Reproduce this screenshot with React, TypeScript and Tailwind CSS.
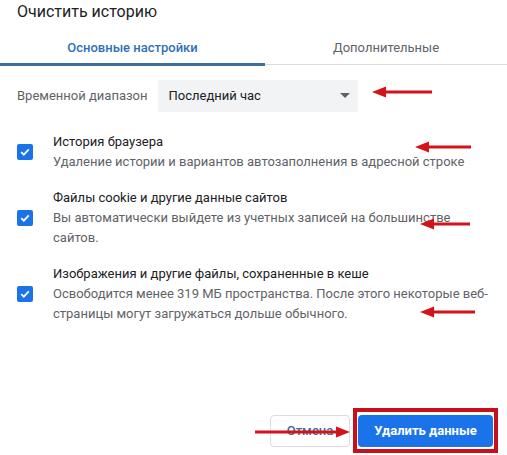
function Arrow({ left, top, width, dir }: { left: number; top: number; width: number; dir: "left" | "right" }) {
  // red annotation arrow drawn over the dialog
  return (
    <svg
      className="absolute pointer-events-none"
      style={{ left, top: top - 6 }}
      width={width}
      height={12}
      viewBox={`0 0 ${width} 12`}
    >
      {dir === "left" ? (
        <>
          <rect x={10} y={4.5} width={width - 10} height={3} fill="#d3131b" />
          <polygon points="0,6 14,0.5 14,11.5" fill="#d3131b" />
        </>
      ) : (
        <>
          <rect x={0} y={4.5} width={width - 10} height={3} fill="#d3131b" />
          <polygon points={`${width},6 ${width - 14},0.5 ${width - 14},11.5`} fill="#d3131b" />
        </>
      )}
    </svg>
  );
}

function Check() {
  return (
    <div className="w-4 h-4 rounded-[2px] bg-[#1a73e8] flex items-center justify-center shrink-0">
      <svg width="12" height="12" viewBox="0 0 12 12">
        <path d="M2.2 6.2 L4.8 8.7 L9.8 3.4" stroke="white" strokeWidth="1.8" fill="none" />
      </svg>
    </div>
  );
}

interface ItemProps {
  title: string;
  desc: string;
}

function Item({ title, desc }: ItemProps) {
  return (
    <div className="flex items-center pl-[17px]">
      <Check />
      <div className="ml-5 w-[440px]">
        <div className="text-[#202124] leading-5">{title}</div>
        <div className="text-[#5f6368] leading-5">{desc}</div>
      </div>
    </div>
  );
}

export default function App() {
  return (
    <div className="relative w-[507px] h-[455px] bg-white overflow-hidden text-[13px] font-['Roboto',sans-serif]">
      <div className="pl-[17px] pt-[2px] text-[16px] leading-5 text-[#202124]">Очистить историю</div>

      <div className="flex mt-[6px] h-[38px]">
        <div className="w-[265px] flex items-center justify-center font-medium text-[#2f6fb8] border-b-[3px] border-[#3b6f9c] pt-[4px]">
          Основные настройки
        </div>
        <div className="flex-1 flex items-center justify-center text-[#5f6368] border-b border-[#dadce0] pt-[4px] mb-[1px]">
          Дополнительные
        </div>
      </div>

      <div className="flex items-center pl-[17px] mt-[14px]">
        <span className="text-[#5f6368]">Временной диапазон</span>
        <div className="ml-[11px] w-[200px] h-[32px] bg-[#f1f3f4] rounded-[2px] flex items-center justify-between pl-[10px] pr-[8px] text-[#202124]">
          <span>Последний час</span>
          <svg width="10" height="6" viewBox="0 0 10 6">
            <polygon points="0,0 10,0 5,5" fill="#5f6368" />
          </svg>
        </div>
      </div>

      <div className="mt-[20px] flex flex-col gap-[16px]">
        <Item title="История браузера" desc="Удаление истории и вариантов автозаполнения в адресной строке" />
        <Item title="Файлы cookie и другие данные сайтов" desc="Вы автоматически выйдете из учетных записей на большинстве сайтов." />
        <Item
          title="Изображения и другие файлы, сохраненные в кеше"
          desc="Освободится менее 319 МБ пространства. После этого некоторые веб-страницы могут загружаться дольше обычного."
        />
      </div>

      <div className="absolute left-0 right-0 bottom-[2px] flex justify-end items-center pr-[9px]">
        <button className="w-[80px] h-[32px] rounded-[4px] border border-[#dadce0] text-[#3f6a9e] font-medium mr-[3px]">
          Отмена
        </button>
        <div className="border-[4px] border-[#c8101a] px-[1px] pt-[3px] pb-[2px]">
          <button className="w-[135px] h-[32px] rounded-[4px] bg-[#1a73e8] text-white font-bold">Удалить данные</button>
        </div>
      </div>

      <Arrow left={372} top={92} width={60} dir="left" />
      <Arrow left={415} top={147} width={56} dir="left" />
      <Arrow left={420} top={224} width={50} dir="left" />
      <Arrow left={420} top={312} width={55} dir="left" />
      <Arrow left={255} top={432} width={95} dir="right" />
    </div>
  );
}
